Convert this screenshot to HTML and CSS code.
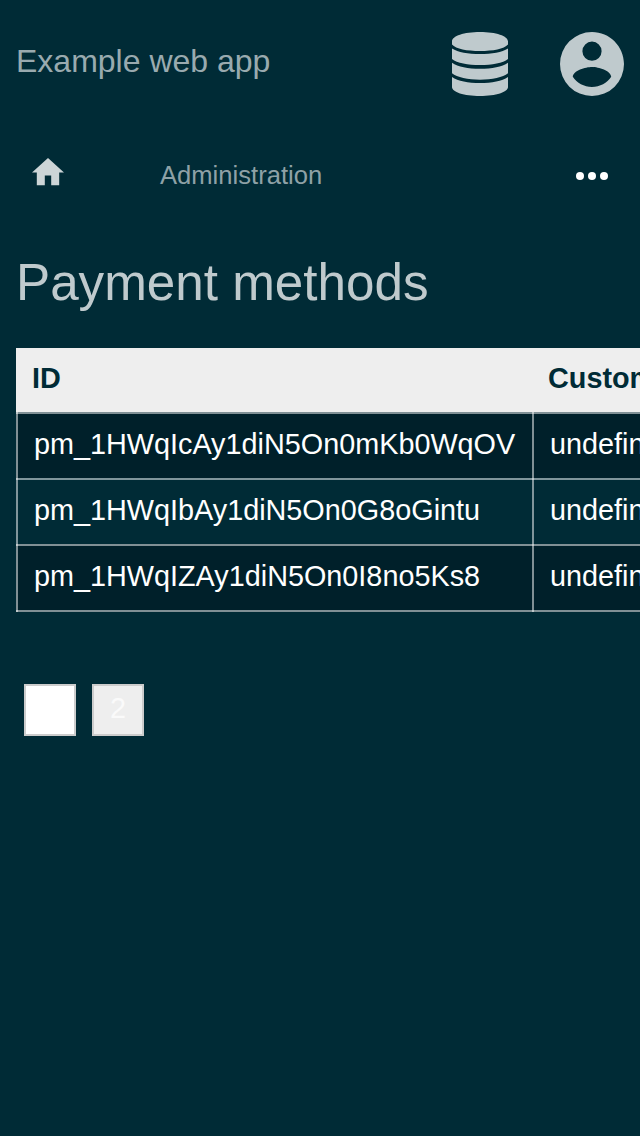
FILE: index.html
```html
<!DOCTYPE html>
<html lang="en">
<head>
<meta charset="utf-8">
<title>Payment methods</title>
<link rel="stylesheet" href="styles.css">
</head>
<body>
<header class="topbar">
  <div class="brand">Example web app</div>
  <div class="actions">
    <svg class="icon" viewBox="-4 0 64 64"><path d="M0 9.500C0 4 12 0 28 0S56 4 56 9.500V12.500C52 17 41 19 28 19S4 17 0 12.500ZM0 16.500C6 20.300 16 22 28 22S50 20.300 56 16.500V27C51 31 40 33 28 33S5 31 0 27ZM0 30.700C6 34.800 16 36.700 28 36.700S50 34.800 56 30.700V41.300C51 45.500 40 47.700 28 47.700S5 45.500 0 41.300ZM0 44.900C6 49 16 51 28 51S50 49 56 44.900V55C56 60 44 64 28 64S0 60 0 55Z"/></svg>
    <svg class="icon" viewBox="2 2 20 20"><path d="M12,19.2C9.5,19.2 7.29,17.92 6,16C6.03,14 10,12.9 12,12.9C14,12.9 17.97,14 18,16C16.71,17.92 14.5,19.2 12,19.2M12,5A3,3 0 0,1 15,8A3,3 0 0,1 12,11A3,3 0 0,1 9,8A3,3 0 0,1 12,5M12,2A10,10 0 0,0 2,12A10,10 0 0,0 12,22A10,10 0 0,0 22,12C22,6.47 17.5,2 12,2Z"/></svg>
  </div>
</header>
<nav class="crumbs">
  <svg class="home" viewBox="2 3 20 17"><path d="M10,20V14H14V20H19V12H22L12,3L2,12H5V20H10Z"/></svg>
  <span class="crumb">Administration</span>
  <svg class="more" viewBox="0 0 32 8"><circle cx="4" cy="4" r="4"/><circle cx="16" cy="4" r="4"/><circle cx="28" cy="4" r="4"/></svg>
</nav>
<main>
  <h1 class="title">Payment methods</h1>
  <div class="table-wrap">
    <table class="table">
      <thead><tr><th>ID</th><th>Customer</th></tr></thead>
      <tbody>
        <tr><td>pm_1HWqIcAy1diN5On0mKb0WqOV</td><td>undefined</td></tr>
        <tr><td>pm_1HWqIbAy1diN5On0G8oGintu</td><td>undefined</td></tr>
        <tr><td>pm_1HWqIZAy1diN5On0I8no5Ks8</td><td>undefined</td></tr>
      </tbody>
    </table>
  </div>
  <div class="pager"><span class="page current">1</span><span class="page">2</span></div>
</main>
</body>
</html>
```
FILE: styles.css
```css
* { box-sizing: border-box; }
html { background: #002b36; }
body {
  margin: 0;
  overflow: hidden;
  color: #fff;
  font-family: "Liberation Sans", Arial, sans-serif;
  font-size: 28.8px;
}
svg { display: block; }
.topbar {
  display: flex;
  justify-content: space-between;
  height: 128px;
  padding: 32px 16px;
}
.brand { font-size: 32px; line-height: 58px; color: #99aaaf; }
.actions { display: flex; gap: 48px; }
.icon { width: 64px; height: 64px; fill: #bfcacd; }
.crumbs {
  display: flex;
  align-items: center;
  height: 96px;
  padding: 0 32px;
}
.home { width: 32px; height: 27.2px; margin: -8px 96px 0 0; fill: #ccd5d7; }
.crumb { flex: 1; padding-bottom: 2px; font-size: 25.6px; line-height: 30px; color: #8ea1a6; }
.more { width: 32px; height: 8px; fill: #fff; }
.title {
  height: 124px;
  margin: 0;
  padding: 27px 16px 0;
  font-size: 51.2px;
  font-weight: 400;
  line-height: 64px;
  color: #bfcacd;
}
.table-wrap { overflow: hidden; padding-left: 16px; }
.table { width: 760px; border-spacing: 0; table-layout: fixed; }
.table th {
  width: 516px;
  height: 64px;
  padding: 0 16px 4px;
  background: #eee;
  color: #002b36;
  text-align: left;
}
.table td {
  --line: linear-gradient(rgba(255, 255, 255, .5), rgba(255, 255, 255, .5));
  height: 66px;
  padding: 0 16px 2px 18px;
  background: var(--line) 0 0 / 2px 100% no-repeat, var(--line) 0 0 / 100% 2px no-repeat;
}
.table th:last-child { width: 244px; }
.table tbody tr:nth-child(odd) td { background-color: #00202a; }
.table tbody tr:last-child td {
  height: 68px;
  padding-bottom: 4px;
  background: var(--line) 0 0 / 2px 100% no-repeat, var(--line) 0 0 / 100% 2px no-repeat, var(--line) 0 100% / 100% 2px no-repeat #00202a;
}
.pager { display: flex; gap: 16px; padding: 72px 24px; }
.page {
  width: 52px;
  height: 52px;
  border: 2px solid #ccc;
  background: #eee;
  color: #fafafa;
  line-height: 45px;
  text-align: center;
}
.current { background: #fff; color: #fff; }
```
